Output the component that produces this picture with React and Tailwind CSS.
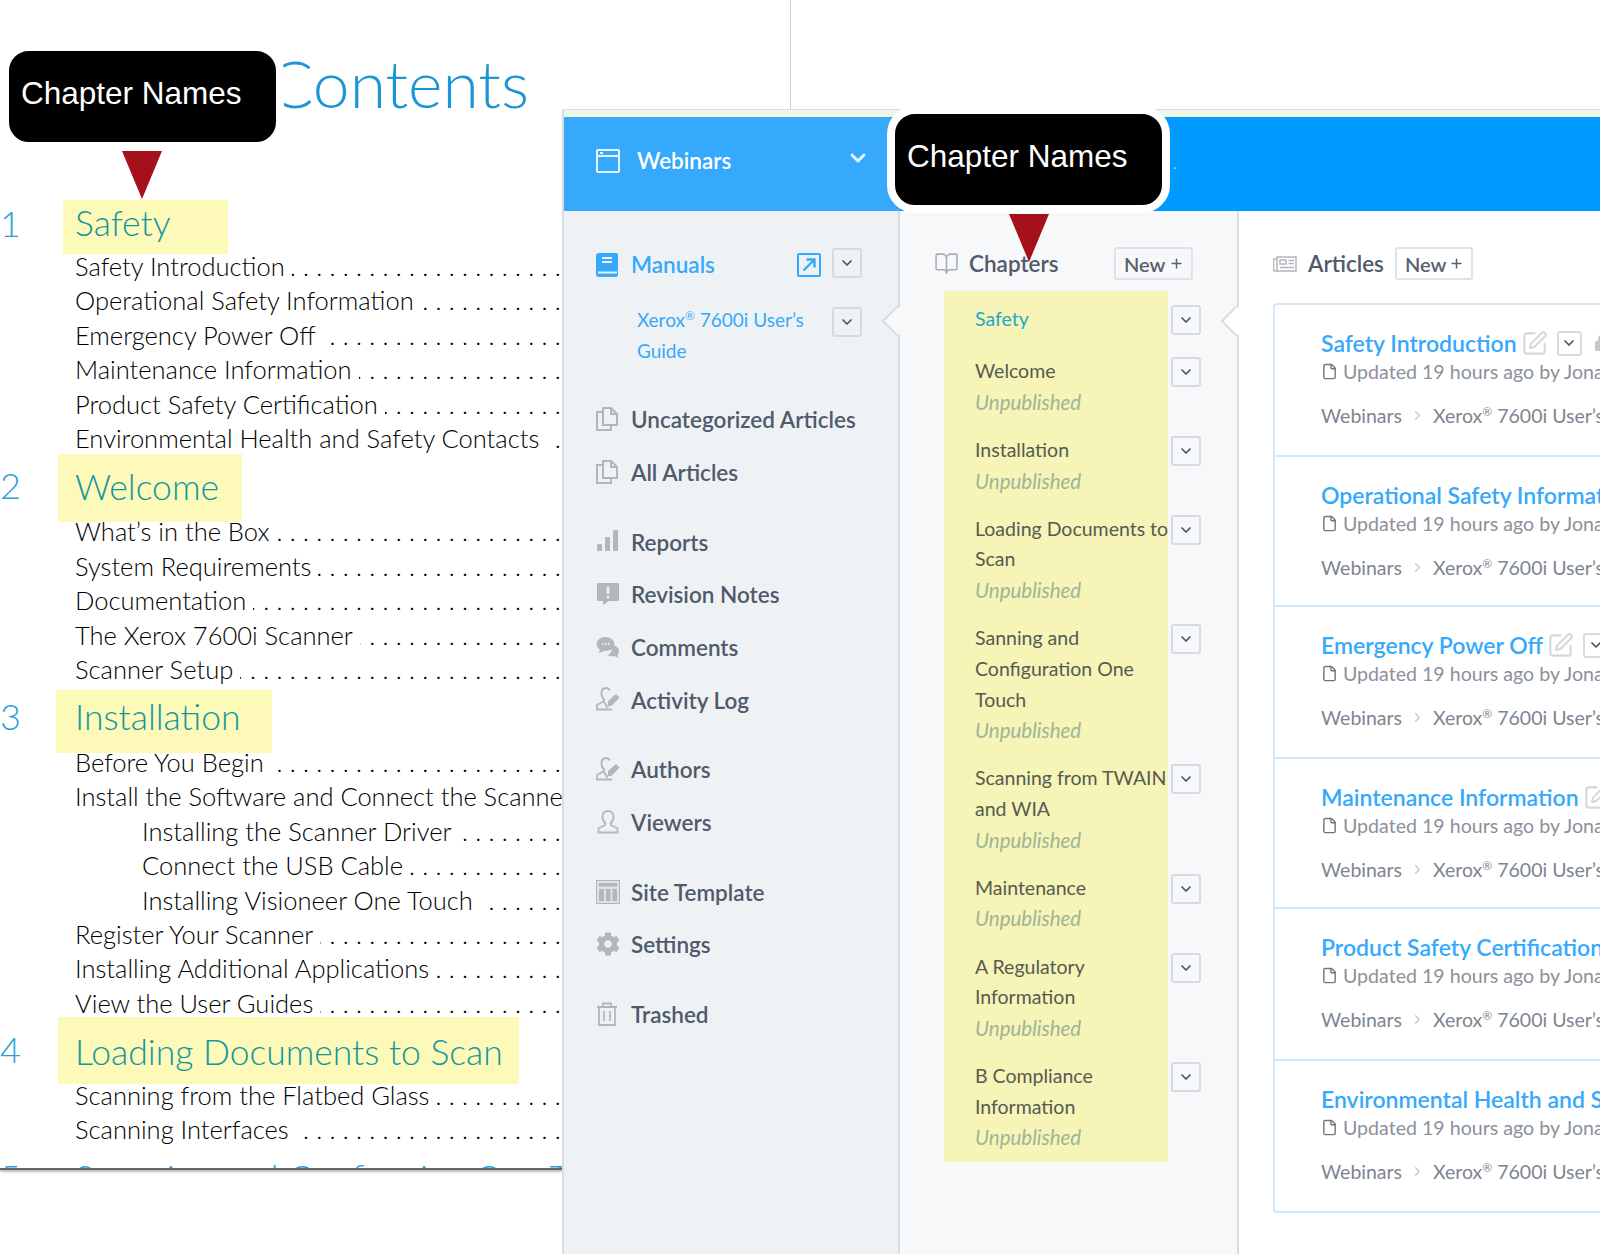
import React from 'react';
import { BookOpen, ChevronDown, ChevronRight, File, Plus, SquarePen } from 'lucide-react';
import { FaCog } from 'react-icons/fa';

const LEADER = '.'.repeat(46);

const SECTIONS = [
  {
    num: '1',
    title: 'Safety',
    rowClass: 'h-[52px]',
    numClass: 'w-[63px]',
    markClass: 'mt-[3px] h-[54px] w-[165px] pl-[12px] pb-[9px]',
    rows: ['Safety Introduction', 'Operational Safety Information', 'Emergency Power Off', 'Maintenance Information', 'Product Safety Certification', 'Environmental Health and Safety Contacts'],
  },
  {
    num: '2',
    title: 'Welcome',
    rowClass: 'h-[59px]',
    numClass: 'w-[58px]',
    markClass: '-mt-[1px] h-[68px] w-[184px] pl-[17px] pb-[3px]',
    rows: ['What’s in the Box', 'System Requirements', 'Documentation', 'The Xerox 7600i Scanner', 'Scanner Setup'],
  },
  {
    num: '3',
    title: 'Installation',
    rowClass: 'h-[58.600px]',
    numClass: 'w-[56px]',
    markClass: 'mt-[4px] h-[63px] w-[216px] pl-[19px] pb-[11px]',
    rows: ['Before You Begin', 'Install the Software and Connect the Scanner', { sub: 'Installing the Scanner Driver' }, { sub: 'Connect the USB Cable' }, { sub: 'Installing Visioneer One Touch' }, 'Register Your Scanner', 'Installing Additional Applications', 'View the User Guides'],
  },
  {
    num: '4',
    title: 'Loading Documents to Scan',
    rowClass: 'h-[58px]',
    numClass: 'w-[58px]',
    markClass: '-mt-[3px] h-[67px] w-[461px] pl-[17px] pt-[3px]',
    rows: ['Scanning from the Flatbed Glass', 'Scanning Interfaces'],
  },
];

const CHAPTERS = [
  { lines: ['Safety'], active: true },
  { lines: ['Welcome'] },
  { lines: ['Installation'] },
  { lines: ['Loading Documents to', 'Scan'] },
  { lines: ['Sanning and', 'Configuration One', 'Touch'] },
  { lines: ['Scanning from TWAIN', 'and WIA'] },
  { lines: ['Maintenance'] },
  { lines: ['A Regulatory', 'Information'] },
  { lines: ['B Compliance', 'Information'] },
];

const ARTICLES = [
  { title: 'Safety Introduction', card: 'h-[152px]' },
  { title: 'Operational Safety Information', card: 'h-[150px]' },
  { title: 'Emergency Power Off', card: 'h-[152px]' },
  { title: 'Maintenance Information', card: 'h-[150px]' },
  { title: 'Product Safety Certification', card: 'h-[152px]' },
  { title: 'Environmental Health and Safety Contacts', card: 'h-[150px]' },
];

function WindowIcon() {
  return (
    <svg viewBox="0 0 24 24" className="h-[24px] w-[24px] shrink-0" fill="none" stroke="#eaf6ff" strokeWidth="2">
      <rect x="1" y="1" width="22" height="22" rx="1" />
      <path d="M1 7h22M4 4h3" />
    </svg>
  );
}

function ManualIcon() {
  return (
    <svg viewBox="0 0 22 24" className="h-[24px] w-[22px]">
      <path d="M3 0h17a2 2 0 0 1 2 2v20l-1 2H3a3 3 0 0 1-3-3V3a3 3 0 0 1 3-3z" fill="#36a9fc" />
      <path d="M6 5h10M6 9h10M2 19.5h19" stroke="#eff2f5" strokeWidth="2" />
    </svg>
  );
}

function ExternalIcon() {
  return (
    <svg viewBox="0 0 24 24" className="h-[24px] w-[24px]" fill="none" stroke="#36a9fc" strokeWidth="2">
      <rect x="1" y="1" width="22" height="22" rx="1" />
      <path d="M6.5 17.5 17 7M9.5 6.5h8v8" strokeWidth="2.4" />
    </svg>
  );
}

function PagesIcon() {
  return (
    <svg viewBox="0 0 22 24" className="h-[24px] w-[22px]" fill="none" stroke="#b3b6bb" strokeWidth="2">
      <path d="M7 1h8l6 6v11H7z" />
      <path d="M7 5H1v18h14v-5" />
      <path d="M15 1v6h6" />
    </svg>
  );
}

function BarsIcon() {
  return (
    <svg viewBox="0 0 22 24" className="h-[24px] w-[22px]" fill="#b3b6bb">
      <rect x="1" y="15" width="5" height="7" rx="1" />
      <rect x="9" y="8" width="5" height="14" rx="1" />
      <rect x="17" y="1" width="5" height="21" rx="1" />
    </svg>
  );
}

function NoteIcon() {
  return (
    <svg viewBox="0 0 24 24" className="h-[24px] w-[24px]">
      <path d="M2 1h20a1 1 0 0 1 1 1v16a1 1 0 0 1-1 1H13l-6 4v-4H2a1 1 0 0 1-1-1V2a1 1 0 0 1 1-1z" fill="#b3b6bb" />
      <path d="M12 4.5v7.5M12 14v2.5" stroke="#eff2f5" strokeWidth="2.6" />
    </svg>
  );
}

function CommentsIcon() {
  return (
    <svg viewBox="0 0 24 24" className="h-[24px] w-[24px]">
      <path d="M16 10c3 .5 7 2 7 6 0 2-1 3-1.500 4l1 3-4-2c-3 1-5 0-7-1 3-1 5-4 4.500-10z" fill="#b3b6bb" />
      <ellipse cx="9.500" cy="9" rx="9" ry="7" fill="#b3b6bb" />
      <path d="M4 14l-1 4 5-2z" fill="#b3b6bb" />
      <path d="M6 9h1.500M9 9h1.500M12 9h1.500" stroke="#eff2f5" strokeWidth="1.800" />
    </svg>
  );
}

function PersonIcon({ pencil }) {
  return (
    <svg viewBox="0 0 24 24" className="h-[24px] w-[24px]" fill="none" stroke="#b3b6bb" strokeWidth="1.800">
      {pencil ? (
        <>
          <path d="M14 3.500C13 2 12 1 10 1 7 1 5.500 3.500 5.500 6.500c0 2.500 1 4.500 2.500 5.500v2l-7 4v4.500h15" />
          <path d="M12 14l8-7 3.500 3.500-7.500 8-4.500 1z" fill="#b3b6bb" stroke="none" />
          <path d="M8 15l3.500 6" />
        </>
      ) : (
        <path d="M12 1c-3.500 0-5.500 2.500-5.500 6 0 2.500 1 4.500 2.500 5.500v2.500l-6.500 3.500v4h19v-4L15 15v-2.500c1.500-1 2.500-3 2.500-5.500 0-3.500-2-6-5.500-6z" />
      )}
    </svg>
  );
}

function TemplateIcon() {
  return (
    <svg viewBox="0 0 24 24" className="h-[24px] w-[24px]" fill="none">
      <rect x="0.500" y="0.500" width="23" height="23" fill="#dfe1e4" stroke="#b3b6bb" />
      <rect x="3" y="3" width="18" height="3.500" fill="#b3b6bb" />
      <rect x="3" y="9" width="5" height="12" fill="#b3b6bb" />
      <rect x="10" y="9" width="4.500" height="12" fill="#b3b6bb" />
      <rect x="16.500" y="9" width="4.500" height="12" fill="#b3b6bb" />
    </svg>
  );
}

function TrashIcon() {
  return (
    <svg viewBox="0 0 22 24" className="h-[24px] w-[22px]" fill="none" stroke="#b3b6bb" strokeWidth="1.800">
      <path d="M1 5h20M3 5v18h16V5M7 5V1.500h8V5M8 9v10M14 9v10" />
    </svg>
  );
}

function NewspaperIcon() {
  return (
    <svg viewBox="0 0 24 16" className="h-[16px] w-[24px] shrink-0" fill="none" stroke="#b3b6bb" strokeWidth="1.500">
      <path d="M4 1h19v14H2a1.500 1.500 0 0 1-1.500-1.500V3H4zM4 3v12" />
      <rect x="7" y="4" width="6" height="4" />
      <path d="M15.500 4.500H21M15.500 7.500H21M7 11.500h14" />
    </svg>
  );
}

function LockIcon() {
  return (
    <svg viewBox="0 0 14 16" className="h-[16px] w-[14px] shrink-0" fill="#c3c7cc">
      <rect x="0" y="6" width="14" height="10" rx="1" />
      <path d="M3 6V4a4 4 0 0 1 8 0v2H9V4a2 2 0 0 0-4 0v2z" />
    </svg>
  );
}

function MenuButton({ className = 'h-[30px] w-[30px]' }) {
  return (
    <button className={`flex shrink-0 items-center justify-center rounded-[3px] border-2 border-[#d7dbdf] ${className}`}>
      <ChevronDown size={16} strokeWidth={2.6} color="#4a5464" />
    </button>
  );
}

function NewButton({ className = '' }) {
  return (
    <button className={`flex h-[33px] items-center justify-between rounded-[3px] border-2 border-[#dfe2e6] pl-[8px] pr-[7px] text-[20px] font-semibold text-[#58616e] ${className}`}>
      New <Plus size={15} strokeWidth={2.4} />
    </button>
  );
}

function NavRow({ icon, label }) {
  return (
    <div className="flex h-[52.700px] items-center whitespace-nowrap">
      <span className="flex w-[35px] shrink-0 items-center">{icon}</span>
      <span className="pt-[2px] text-[22.500px] font-semibold text-[#4f5a6a]">{label}</span>
    </div>
  );
}

function Registered() {
  return <span className="align-super text-[12px] leading-none">®</span>;
}

function TocRow({ row }) {
  const sub = typeof row === 'object';
  const label = sub ? row.sub : row;
  return (
    <div className={`flex h-[34.400px] items-center whitespace-nowrap text-[25.500px] text-black ${sub ? 'pl-[142px]' : 'pl-[75px]'}`}>
      <span className="shrink-0">{label}</span>
      <span className="ml-[7px] flex min-w-0 flex-1 justify-end overflow-hidden">
        <span className="-mr-[6px] shrink-0 tracking-[7.300px]">{LEADER}</span>
      </span>
    </div>
  );
}

function ManualPage() {
  return (
    <div className="h-full w-[562px] shrink-0 overflow-hidden font-['Lato',sans-serif] font-light">
      <div className="flex h-[197px] justify-end whitespace-nowrap pr-[33px] pt-[38px] text-[66px] leading-[90px] text-[#1b95d6]">
        Table of Contents
      </div>
      {SECTIONS.map((section) => (
        <section key={section.num}>
          <div className={`flex whitespace-nowrap ${section.rowClass}`}>
            <span className={`flex shrink-0 items-center text-[36px] text-[#2a9fd8] ${section.numClass}`}>{section.num}</span>
            <span className={`flex shrink-0 items-center bg-[#fdf9b9] text-[35.500px] text-[#12979e] ${section.markClass}`}>{section.title}</span>
          </div>
          {section.rows.map((row) => (
            <TocRow key={typeof row === 'object' ? row.sub : row} row={row} />
          ))}
        </section>
      ))}
      {/* the page ends here: only the tops of the next heading show */}
      <div className="h-[23px] overflow-hidden border-b-2 border-[#666] pt-[9px] shadow-[0_2px_2px_#bbb]">
        <div className="flex whitespace-nowrap text-[35.500px] leading-[44px] text-[#2a9fd8]">
          <span className="w-[75px] shrink-0">5</span>
          <span>Scanning and Configuring One Touch</span>
        </div>
      </div>
    </div>
  );
}

function Sidebar() {
  return (
    <aside className="relative w-[336px] shrink-0 border-r-2 border-[#d8dde2] bg-[#eff2f5] pl-[32px] pr-[36px] pt-[37px]">
      <div className="flex h-[30px] items-center">
        <span className="flex w-[35px] shrink-0 items-center pt-[4px]"><ManualIcon /></span>
        <span className="flex-1 pt-[4px] text-[22.500px] font-semibold text-[#36a9fc]">Manuals</span>
        <span className="mr-[11px] pt-[4px]"><ExternalIcon /></span>
        <MenuButton />
      </div>
      <div className="mt-[29px] flex items-start pl-[41px]">
        <div className="-mt-[2px] flex-1 text-[19px] leading-[30.600px] text-[#36a9fc]">
          <div>Xerox<Registered /> 7600i User’s</div>
          <div>Guide</div>
        </div>
        <MenuButton />
      </div>
      <div className="mt-[26.500px]">
        <NavRow icon={<PagesIcon />} label="Uncategorized Articles" />
        <NavRow icon={<PagesIcon />} label="All Articles" />
      </div>
      <div className="mt-[17px]">
        <NavRow icon={<BarsIcon />} label="Reports" />
        <NavRow icon={<NoteIcon />} label="Revision Notes" />
        <NavRow icon={<CommentsIcon />} label="Comments" />
        <NavRow icon={<PersonIcon pencil />} label="Activity Log" />
      </div>
      <div className="mt-[17px]">
        <NavRow icon={<PersonIcon pencil />} label="Authors" />
        <NavRow icon={<PersonIcon />} label="Viewers" />
      </div>
      <div className="mt-[17px]">
        <NavRow icon={<TemplateIcon />} label="Site Template" />
        <NavRow icon={<FaCog size={24} color="#b3b6bb" />} label="Settings" />
      </div>
      <div className="mt-[17px]">
        <NavRow icon={<TrashIcon />} label="Trashed" />
      </div>
      {/* notch pointing at the selected manual */}
      <span className="absolute right-[-10px] top-[99px] h-[22px] w-[22px] rotate-45 border-b-2 border-l-2 border-[#d8dde2] bg-[#f7f8fa]" />
    </aside>
  );
}

function ChaptersPanel() {
  return (
    <div className="relative w-[339px] shrink-0 border-r-2 border-[#d8dde2] bg-[#f7f8fa] pl-[34px] pt-[36px]">
      <div className="flex h-[33px] items-center">
        <BookOpen size={25} strokeWidth={1.500} color="#a9adb3" />
        <span className="ml-[10px] flex-1 text-[22.500px] font-semibold text-[#4f5a6a]">Chapters</span>
        <NewButton className="mr-[44px] w-[79px]" />
      </div>
      <div className="relative ml-[10px] mt-[11px] w-[224px] bg-[#f6f4b7] pb-[9px] pl-[31px] pt-[13px]">
        {CHAPTERS.map((chapter) => (
          <div key={chapter.lines[0]} className={`relative whitespace-nowrap leading-[30.600px] last:mb-0 ${chapter.active ? 'mb-[21.500px]' : 'mb-[17.700px]'}`}>
            {chapter.lines.map((line) => (
              <div key={line} className={`text-[19.500px] ${chapter.active ? 'text-[#22a9c4]' : 'text-[#555b52]'}`}>{line}</div>
            ))}
            {!chapter.active && <div className="text-[20.500px] italic text-[#9eb598]">Unpublished</div>}
            <span className="absolute left-[196px] top-[1px]">
              <MenuButton />
            </span>
          </div>
        ))}
      </div>
      <span className="absolute right-[-10px] top-[99px] h-[22px] w-[22px] rotate-45 border-b-2 border-l-2 border-[#d8dde2] bg-white" />
    </div>
  );
}

function ArticlesPanel() {
  return (
    <div className="min-w-0 flex-1 bg-white pl-[34px] pt-[36px]">
      <div className="flex h-[33px] items-center">
        <NewspaperIcon />
        <span className="ml-[11px] text-[22.500px] font-semibold text-[#4f5a6a]">Articles</span>
        <NewButton className="ml-[11px] w-[78px]" />
      </div>
      <div className="mt-[23px] w-[400px] rounded-[4px] border-2 border-[#cfe8fb]">
        {ARTICLES.map((article) => (
          <article key={article.title} className={`whitespace-nowrap border-b-2 border-[#cfe8fb] pl-[46px] pt-[23px] last:border-b-0 ${article.card}`}>
            <div className="flex h-[30px] items-center">
              <span className="text-[23px] font-semibold text-[#36a9fc]">{article.title}</span>
              <SquarePen size={27} strokeWidth={1.800} color="#d3d8dc" className="ml-[4px] shrink-0" />
              <span className="ml-[9px] flex"><MenuButton className="h-[25px] w-[25px]" /></span>
              <span className="ml-[13px] flex"><LockIcon /></span>
            </div>
            <div className="flex h-[27px] items-center text-[19.600px] text-[#8b919b]">
              <File size={17} strokeWidth={2} color="#6f7680" className="mr-[5px] shrink-0" />
              Updated 19 hours ago by Jonathan
            </div>
            <div className="mt-[16px] flex items-center text-[19.500px] text-[#7d8592]">
              Webinars
              <ChevronRight size={15} strokeWidth={2} color="#c3c7cc" className="mx-[8px] shrink-0" />
              <span>Xerox<Registered /> 7600i User’s Guide</span>
            </div>
          </article>
        ))}
      </div>
    </div>
  );
}

function AppWindow() {
  return (
    <div className="flex h-full min-w-0 flex-1 flex-col">
      <div className="flex h-[109px] shrink-0 pl-[228px]">
        <span className="h-full w-px bg-[#cfcfcf]" />
      </div>
      <div className="flex min-h-0 flex-1 flex-col border-l-2 border-[#d8dde2] font-['Lato',sans-serif]">
        <div className="h-[8px] shrink-0 border-t border-[#d8dde2] bg-[#eef7e4]" />
        <header className="flex h-[94px] shrink-0">
          <div className="flex w-[336px] shrink-0 items-start bg-[#36a9fc] pl-[32px] pt-[32px] text-white">
            <WindowIcon />
            <span className="ml-[17px] flex h-[24px] flex-1 items-center text-[22.500px] font-semibold">Webinars</span>
            <ChevronDown size={24} strokeWidth={3} color="#eaf6ff" className="-mt-[3px] mr-[30px]" />
          </div>
          <div className="flex-1 bg-[#0099ff] pl-[273px] pt-[36px] text-[14px] text-white/70">.</div>
        </header>
        <main className="flex min-h-0 flex-1">
          <Sidebar />
          <ChaptersPanel />
          <ArticlesPanel />
        </main>
      </div>
    </div>
  );
}

function Callout({ className }) {
  return (
    <div className={`absolute h-[107px] w-[283px] rounded-[28px] border-[8px] border-white bg-black pl-[12px] pt-[20px] font-['Liberation_Sans',sans-serif] text-[31.500px] leading-[44px] text-white ${className}`}>
      Chapter Names
    </div>
  );
}

function Pointer({ className }) {
  return (
    <svg viewBox="0 0 40 48" className={`absolute h-[48px] w-[40px] ${className}`}>
      <polygon points="0,0 40,0 20,48" fill="#a5111a" />
    </svg>
  );
}

export default function App() {
  return (
    <div className="relative flex h-[1254px] w-[1600px] overflow-hidden bg-white">
      <ManualPage />
      <AppWindow />
      <Callout className="left-[1px] top-[43px]" />
      <Pointer className="left-[122px] top-[151px]" />
      <Callout className="left-[887px] top-[106px]" />
      <Pointer className="left-[1009px] top-[214px]" />
    </div>
  );
}
